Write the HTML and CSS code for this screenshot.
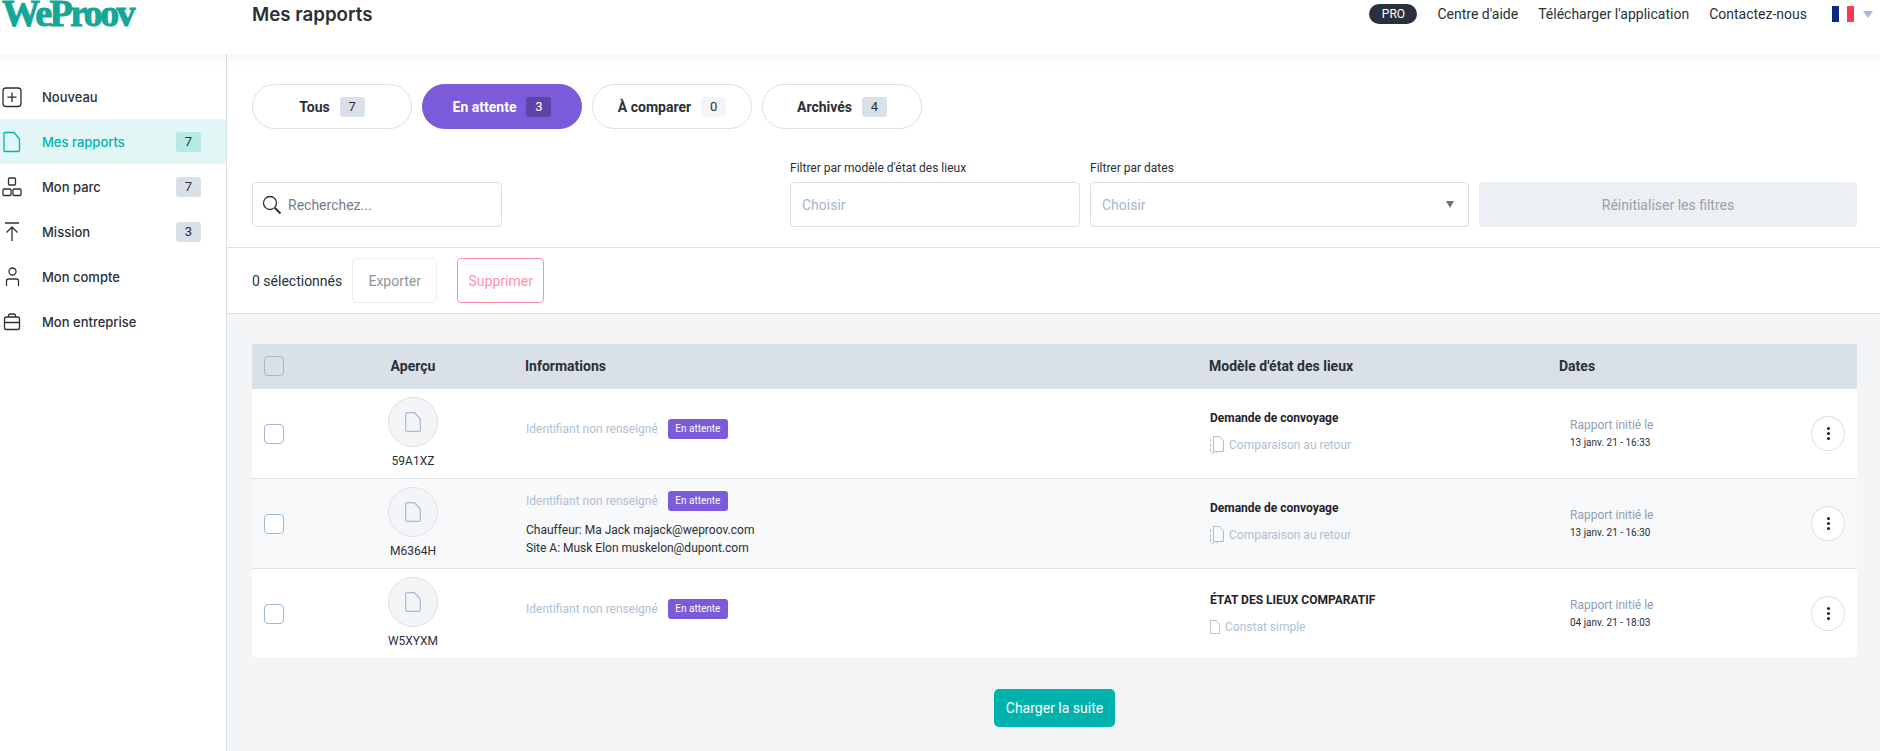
FILE: index.html
```html
<!DOCTYPE html>
<html lang="fr">
<head>
<meta charset="utf-8">
<title>Mes rapports</title>
<link rel="stylesheet" href="styles.css">
</head>
<body>
<header class="topbar">
  <div class="logo-cell"><span class="logo">WeProov</span></div>
  <h1 class="page-title">Mes rapports</h1>
  <nav class="topnav">
    <span class="pro">PRO</span>
    <a class="toplink">Centre d'aide</a>
    <a class="toplink">Télécharger l'application</a>
    <a class="toplink toplink-last">Contactez-nous</a>
    <span class="flag"><i class="flag-b"></i><i class="flag-w"></i><i class="flag-r"></i></span>
    <span class="lang-caret"></span>
  </nav>
</header>
<div class="layout">
  <aside class="sidebar">
    <a class="nav-item">
      <svg class="nav-icon" viewBox="0 0 24 24"><rect x="3" y="3" width="18" height="18.5" rx="3"/><path d="M12 7.500v9.500M7.500 12.200h9"/></svg>
      <span class="nav-label">Nouveau</span>
    </a>
    <a class="nav-item nav-active">
      <svg class="nav-icon" viewBox="0 0 24 24"><path d="M5 2.500h9l5.500 6.500v11.500a1 1 0 0 1-1 1H5a1 1 0 0 1-1-1V3.500a1 1 0 0 1 1-1z"/></svg>
      <span class="nav-label">Mes rapports</span><span class="nav-badge">7</span>
    </a>
    <a class="nav-item">
      <svg class="nav-icon" viewBox="0 0 24 24"><rect x="8.500" y="3" width="7" height="7" rx="1"/><rect x="3" y="14" width="8" height="6.500" rx="1"/><rect x="13" y="14" width="8" height="6.500" rx="1"/></svg>
      <span class="nav-label">Mon parc</span><span class="nav-badge">7</span>
    </a>
    <a class="nav-item">
      <svg class="nav-icon" viewBox="0 0 24 24"><path d="M5 3h14M12 21V7M6.500 12.500 12 7l5.500 5.500"/></svg>
      <span class="nav-label">Mission</span>
      <span class="nav-badge">3</span>
    </a>
    <a class="nav-item">
      <svg class="nav-icon" viewBox="0 0 24 24"><circle cx="12.500" cy="6.500" r="3.500"/><path d="M6.500 21v-5a2 2 0 0 1 2-2h8a2 2 0 0 1 2 2v5"/></svg>
      <span class="nav-label">Mon compte</span>
    </a>
    <a class="nav-item">
      <svg class="nav-icon" viewBox="0 0 24 24"><rect x="4.500" y="7" width="15" height="12.500" rx="2"/><path d="M8.500 7V5.500a1.500 1.500 0 0 1 1.500-1.500h4a1.500 1.500 0 0 1 1.500 1.500V7M4.500 12.500h15"/></svg>
      <span class="nav-label">Mon entreprise</span>
    </a>
  </aside>
  <main class="content">
    <section class="filters">
      <div class="tabs">
        <button class="tab">Tous<span class="count">7</span></button>
        <button class="tab tab-active">En attente<span class="count">3</span></button>
        <button class="tab">À comparer<span class="count count-light">0</span></button>
        <button class="tab">Archivés<span class="count">4</span></button>
      </div>
      <div class="filter-row">
        <div class="field search">
          <svg class="search-icon" viewBox="0 0 20 20"><circle cx="8" cy="8" r="6.500"/><path class="search-handle" d="m13 13 5.500 5.500"/></svg>
          <span class="search-text">Recherchez...</span>
        </div>
        <div class="filter-group">
          <div class="filter filter-model">
            <label class="filter-label">Filtrer par modèle d'état des lieux</label>
            <div class="field"><span class="placeholder">Choisir</span></div>
          </div>
          <div class="filter filter-date">
            <label class="filter-label">Filtrer par dates</label>
            <div class="field field-select"><span class="placeholder">Choisir</span><span class="select-caret"></span></div>
          </div>
          <button class="reset">Réinitialiser les filtres</button>
        </div>
      </div>
    </section>
    <section class="actions">
      <span class="selected">0 sélectionnés</span>
      <button class="action-btn">Exporter</button>
      <button class="action-btn action-danger">Supprimer</button>
    </section>
    <section class="list">
      <div class="table">
        <div class="row row-head">
          <div class="cell-check"><span class="checkbox checkbox-head"></span></div>
          <div class="cell-preview">Aperçu</div>
          <div class="cell-info">Informations</div>
          <div class="cell-model">Modèle d'état des lieux</div>
          <div class="cell-dates">Dates</div>
        </div>

        <div class="row row-body">
          <div class="cell-check"><span class="checkbox"></span></div>
          <div class="cell-preview preview">
            <span class="avatar"><svg class="avatar-doc" viewBox="0 0 16 20"><path d="M2 .7h7.500l5.800 6.300v11a1.300 1.300 0 0 1-1.300 1.300H2A1.300 1.300 0 0 1 .7 18V2A1.300 1.300 0 0 1 2 .7z"/></svg></span>
            <span class="plate">59A1XZ</span>
          </div>
          <div class="cell-info info">
            <div class="info-head"><span class="ident">Identifiant non renseigné</span><span class="status">En attente</span></div>
          </div>
          <div class="cell-model model">
            <div class="model-title">Demande de convoyage</div>
            <div class="model-sub model-compare">
              <svg class="compare-icon" viewBox="0 0 14 18"><path class="dash" d="M.5 3v14h7"/><path d="M3.500.5h6l4 4.500v10.500h-10z"/></svg>
              <span>Comparaison au retour</span>
            </div>
          </div>
          <div class="cell-dates dates"><div class="date-label">Rapport initié le</div><div class="date-value">13 janv. 21 - 16:33</div></div>
          <button class="menu"><i></i><i></i><i></i></button>
        </div>

        <div class="row row-body row-alt">
          <div class="cell-check"><span class="checkbox"></span></div>
          <div class="cell-preview preview">
            <span class="avatar"><svg class="avatar-doc" viewBox="0 0 16 20"><path d="M2 .7h7.500l5.800 6.300v11a1.300 1.300 0 0 1-1.300 1.300H2A1.300 1.300 0 0 1 .7 18V2A1.300 1.300 0 0 1 2 .7z"/></svg></span>
            <span class="plate">M6364H</span>
          </div>
          <div class="cell-info info">
            <div class="info-head"><span class="ident">Identifiant non renseigné</span><span class="status">En attente</span></div>
            <div class="contact">Chauffeur: Ma Jack majack@weproov.com</div>
            <div class="contact">Site A: Musk Elon muskelon@dupont.com</div>
          </div>
          <div class="cell-model model">
            <div class="model-title">Demande de convoyage</div>
            <div class="model-sub model-compare">
              <svg class="compare-icon" viewBox="0 0 14 18"><path class="dash" d="M.5 3v14h7"/><path d="M3.500.5h6l4 4.500v10.500h-10z"/></svg>
              <span>Comparaison au retour</span>
            </div>
          </div>
          <div class="cell-dates dates"><div class="date-label">Rapport initié le</div><div class="date-value">13 janv. 21 - 16:30</div></div>
          <button class="menu"><i></i><i></i><i></i></button>
        </div>

        <div class="row row-body row-last">
          <div class="cell-check"><span class="checkbox"></span></div>
          <div class="cell-preview preview">
            <span class="avatar"><svg class="avatar-doc" viewBox="0 0 16 20"><path d="M2 .7h7.500l5.800 6.300v11a1.300 1.300 0 0 1-1.300 1.300H2A1.300 1.300 0 0 1 .7 18V2A1.300 1.300 0 0 1 2 .7z"/></svg></span>
            <span class="plate">W5XYXM</span>
          </div>
          <div class="cell-info info">
            <div class="info-head"><span class="ident">Identifiant non renseigné</span><span class="status">En attente</span></div>
          </div>
          <div class="cell-model model">
            <div class="model-title">ÉTAT DES LIEUX COMPARATIF</div>
            <div class="model-sub">
              <svg class="simple-icon" viewBox="0 0 10 14"><path d="M.5.5h5.500l3.500 4v9h-9z"/></svg>
              <span>Constat simple</span>
            </div>
          </div>
          <div class="cell-dates dates"><div class="date-label">Rapport initié le</div><div class="date-value">04 janv. 21 - 18:03</div></div>
          <button class="menu"><i></i><i></i><i></i></button>
        </div>
      </div>
      <div class="more"><button class="more-btn">Charger la suite</button></div>
    </section>
  </main>
</div>
</body>
</html>
```
FILE: styles.css
```css
* { box-sizing: border-box; }
html, body { margin: 0; height: 100%; }
body {
  height: 751px;
  overflow: hidden;
  background: #fff;
  color: #2b2f38;
  font-family: Roboto, "Liberation Sans", sans-serif;
  font-size: 14px;
}
button { font-family: inherit; cursor: pointer; }

/* Top bar */
.topbar {
  position: relative;
  z-index: 2;
  display: flex;
  align-items: flex-start;
  height: 54px;
  background: #fff;
  box-shadow: 0 2px 14px rgba(40, 50, 70, .07);
}
.logo-cell { width: 252px; height: 30px; padding-left: 2px; }
.logo {
  display: block;
  font-family: "Liberation Serif", serif;
  font-weight: 700;
  font-size: 38px;
  line-height: 27px;
  letter-spacing: -2.600px;
  color: #14a697;
  -webkit-text-stroke: 1px #14a697;
}
.page-title {
  margin: 0;
  font-family: Inter, sans-serif;
  font-weight: 600;
  font-size: 18.700px;
  line-height: 29px;
  color: #2b2f38;
}
.topnav { display: flex; align-items: center; height: 28px; margin-left: auto; padding-right: 7px; }
.pro {
  width: 48px;
  height: 20px;
  margin-right: 20px;
  border-radius: 10px;
  background: #2b313c;
  color: #fff;
  font-size: 12px;
  line-height: 20px;
  text-align: center;
}
.toplink { margin-right: 20px; font-size: 14px; color: #2b2f38; white-space: nowrap; }
.toplink-last { margin-right: 25px; }
.flag { display: flex; width: 22px; height: 16px; }
.flag i { flex: 1; }
.flag-b { background: #0a2a78; }
.flag-w { background: #fff; }
.flag-r { background: #f93b50; }
.lang-caret {
  margin-left: 9px;
  border-left: 5px solid transparent;
  border-right: 5px solid transparent;
  border-top: 7px solid #a9bdd0;
}

.layout { display: flex; height: 697px; }

/* Sidebar */
.sidebar {
  flex: 0 0 227px;
  padding-top: 20px;
  border-right: 1px solid #d9e0e8;
  background: #fff;
}
.nav-item {
  display: flex;
  align-items: center;
  height: 45px;
  padding-right: 25px;
  color: #2b2f38;
}
.nav-icon {
  flex: 0 0 24px;
  width: 24px;
  height: 24px;
  margin-right: 18px;
  fill: none;
  stroke: #2b2f38;
  stroke-width: 1.300;
}
.nav-label { font-family: Inter, sans-serif; font-weight: 500; font-size: 13px; }
.nav-badge {
  width: 25px;
  height: 20px;
  margin-left: auto;
  border-radius: 3px;
  background: #d9e0e8;
  font-size: 13px;
  line-height: 20px;
  text-align: center;
}
.nav-active { background: #e2f6f5; color: #00b3ae; }
.nav-active .nav-icon { stroke: #00b3ae; }
.nav-active .nav-badge { background: #b9e9e6; color: #2b2f38; }

/* Main */
.content { flex: 1; min-width: 0; display: flex; flex-direction: column; }
.filters { padding: 30px 23px 20px 25px; border-bottom: 1px solid #d9e0e8; }
.tabs { display: flex; gap: 10px; }
.tab {
  display: flex;
  align-items: center;
  justify-content: center;
  gap: 10px;
  width: 160px;
  height: 45px;
  padding: 0;
  border: 1px solid #d9e0e8;
  border-radius: 23px;
  background: #fff;
  color: #2b2f38;
  font-size: 14px;
  font-weight: 700;
}
.tab-active { border-color: #7b5bd9; background: #7b5bd9; color: #fff; }
.count {
  width: 25px;
  height: 20px;
  border-radius: 3px;
  background: #d9e0e8;
  color: #2b2f38;
  font-size: 13px;
  font-weight: 400;
  line-height: 20px;
}
.tab-active .count { background: #5f43a8; color: #fff; }
.count-light { background: #f3f5f7; }

.filter-row { display: flex; align-items: flex-end; justify-content: space-between; margin-top: 31px; }
.field {
  display: flex;
  align-items: center;
  height: 45px;
  padding: 0 11px;
  border: 1px solid #d9e0e8;
  border-radius: 4px;
  background: #fff;
}
.search { width: 250px; padding-left: 9px; }
.search-icon { width: 20px; height: 20px; margin-right: 6px; fill: none; stroke: #2b2f38; stroke-width: 1.300; flex: none; }
.search-handle { stroke-width: 2; }
.search-text { color: #777d85; font-size: 14px; }
.filter-group { display: flex; align-items: flex-end; gap: 10px; }
.filter-label { display: block; margin-bottom: 6px; font-size: 12px; line-height: 16px; color: #2b2f38; }
.filter-model { width: 290px; }
.filter-date { width: 379px; }
.placeholder { color: #a7b7cb; font-size: 14px; }
.field-select { justify-content: space-between; }
.select-caret {
  margin-right: 3px;
  border-left: 4px solid transparent;
  border-right: 4px solid transparent;
  border-top: 7px solid #6c7580;
}
.reset {
  width: 378px;
  height: 45px;
  border: 0;
  border-radius: 4px;
  background: #eceff3;
  color: #9aa1a8;
  font-size: 14px;
}

.actions {
  display: flex;
  align-items: center;
  height: 66px;
  padding-left: 25px;
  border-bottom: 1px solid #d9e0e8;
  flex: none;
}
.selected { margin-right: 10px; font-size: 14px; }
.action-btn {
  width: 85px;
  height: 45px;
  padding: 0;
  border: 1px solid #ecedef;
  border-radius: 4px;
  background: #fff;
  color: #90959b;
  font-size: 14px;
}
.action-danger { width: 87px; margin-left: 20px; border-color: #ff92a8; color: #ff92a8; }

.list { flex: 1; padding: 30px 23px 0 25px; background: #f3f5f7; }
.table { border-radius: 0 0 6px 6px; overflow: hidden; background: #fff; }
.row { display: grid; grid-template-columns: 81px 160px 716px 350px 1fr 46px; align-items: center; }
.row-head { height: 45px; padding-bottom: 1px; background: #d9e0e8; font-weight: 700; font-size: 14px; color: #2b2f38; }
.row-body { height: 90px; border-bottom: 1px solid #d9e0e8; }
.row-alt { background: #f8f9fa; }
.row-last { height: 89px; border-bottom: 0; }
.cell-check { padding-left: 12px; display: flex; }
.checkbox { width: 20px; height: 20px; border: 1px solid #a3b9d1; border-radius: 4px; background: #fff; }
.checkbox-head { background: transparent; }
.cell-preview { text-align: center; }
.cell-info { padding-left: 32px; }
.row-head .cell-dates { grid-column: 5 / 7; }

.preview { display: flex; flex-direction: column; align-items: center; align-self: start; padding-top: 8px; }
.avatar {
  display: flex;
  align-items: center;
  justify-content: center;
  width: 50px;
  height: 50px;
  border: 1px solid #d9e0e8;
  border-radius: 50%;
  background: #f3f5f7;
}
.avatar-doc { width: 16px; height: 20px; fill: none; stroke: #a9bdd5; stroke-width: 1.300; }
.plate { margin-top: 6px; font-size: 12px; line-height: 16px; color: #2b2f38; }

.info { padding-left: 33px; }
.info-head { display: flex; align-items: center; height: 20px; margin-bottom: 10px; }
.ident { font-size: 12px; color: #afbfd2; }
.status {
  width: 60px;
  height: 20px;
  margin-left: 10px;
  border-radius: 3px;
  background: #7b5bd9;
  color: #fff;
  font-size: 10px;
  line-height: 20px;
  text-align: center;
}
.contact { font-size: 12px; line-height: 18px; color: #2b2f38; }
.info-head + .contact { margin-top: 2px; }

.model { padding-left: 1px; }
.model-title { font-size: 12px; font-weight: 700; line-height: 18px; color: #1f2329; }
.model-sub { display: flex; align-items: center; gap: 5px; margin-top: 9px; font-size: 12px; line-height: 18px; color: #afbfd2; }
.model-compare { margin-bottom: 4px; gap: 5px; }
.compare-icon { width: 14px; height: 18px; fill: none; stroke: #a9bdd5; stroke-width: 1; flex: none; }
.compare-icon .dash { stroke-dasharray: 3 2; }
.simple-icon { width: 10px; height: 14px; fill: none; stroke: #b9c7d8; stroke-width: 1; flex: none; }

.dates { padding-left: 11px; padding-top: 1px; }
.date-label { font-size: 12px; line-height: 17px; color: #8f9eb0; }
.date-value { font-size: 10px; font-weight: 400; line-height: 17px; color: #2b2f38; }

.menu {
  display: flex;
  flex-direction: column;
  align-items: center;
  justify-content: center;
  gap: 2px;
  width: 34px;
  height: 35px;
  padding: 0;
  border: 1px solid #d9e0e8;
  border-radius: 50%;
  background: #fff;
}
.menu i { width: 3px; height: 3px; border-radius: 50%; background: #1f2329; }

.more { display: flex; justify-content: center; margin-top: 31px; }
.more-btn {
  width: 121px;
  height: 38px;
  border: 0;
  border-radius: 5px;
  background: #00b2ae;
  color: #fff;
  font-size: 14px;
}
```
